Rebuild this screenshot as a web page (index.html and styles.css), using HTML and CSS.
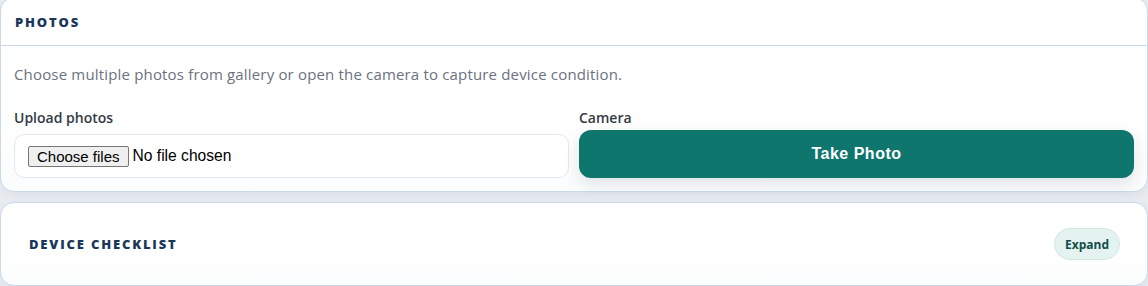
FILE: index.html
```html
<!DOCTYPE html>
<html>
<head>
<meta charset="utf-8">
<link rel="stylesheet" href="styles.css">
</head>
<body>
<div class="page">
  <section class="card card-photos">
    <div class="card-head">
      <h2 class="card-title">PHOTOS</h2>
    </div>
    <div class="card-body">
      <p class="hint">Choose multiple photos from gallery or open the camera to capture device condition.</p>
      <div class="grid">
        <div class="field">
          <span class="label">Upload photos</span>
          <label class="file-box">
            <input class="file-native" type="file" multiple>
            <span class="file-btn">Choose files</span>
            <span class="file-name">No file chosen</span>
          </label>
        </div>
        <div class="field">
          <span class="label">Camera</span>
          <button class="btn-primary" type="button">Take Photo</button>
        </div>
      </div>
    </div>
  </section>
  <section class="card card-check">
    <h2 class="card-title">DEVICE CHECKLIST</h2>
    <button class="btn-pill" type="button">Expand</button>
  </section>
</div>
</body>
</html>
```
FILE: styles.css
```css
* { box-sizing: border-box; }
html, body { margin: 0; padding: 0; }
body {
  background: #e8ecf1;
  font-family: "Open Sans", "Noto Sans", sans-serif;
  width: 1148px;
  height: 286px;
  overflow: hidden;
}
.page {
  display: flex;
  flex-direction: column;
  gap: 10px;
  margin-top: -3px;
}
.card {
  background: linear-gradient(#ffffff 60%, #fbfcfd);
  border: 1px solid #c7d9ea;
  border-radius: 14px;
  box-shadow: 0 3px 8px rgba(30, 58, 95, 0.06);
}
.card-head {
  padding: 15px 14px 13px;
  border-bottom: 1px solid #c7d9ea;
}
.card-title {
  margin: 0;
  font-size: 13px;
  line-height: 19px;
  font-weight: 800;
  letter-spacing: 0.14em;
  color: #1a375a;
}
.card-body {
  padding: 18px 13px 13px;
}
.hint {
  margin: 0;
  font-size: 15px;
  line-height: 20px;
  letter-spacing: 0.17px;
  color: #6b7280;
}
.grid {
  display: grid;
  grid-template-columns: 1fr 1fr;
  gap: 10px;
  align-items: end;
  margin-top: 24px;
}
.field {
  display: flex;
  flex-direction: column;
}
.label {
  font-size: 14px;
  line-height: 20px;
  font-weight: 600;
  color: #333a44;
}
.file-box {
  margin-top: 6px;
  height: 44px;
  border: 1px solid #e3e7ec;
  border-radius: 10px;
  padding: 0 12px 0 13px;
  display: flex;
  align-items: center;
  gap: 4px;
  background: #fff;
  font-family: "Liberation Sans", Arial, sans-serif;
  color: #000;
}
.file-native {
  display: none;
}
.file-btn {
  height: 21px;
  padding: 0 8px;
  display: flex;
  align-items: center;
  font-size: 15px;
  background: #efefef;
  border: 1px solid #767676;
  border-radius: 2px;
}
.file-name {
  font-size: 15.6px;
}
.btn-primary {
  margin-top: 2px;
  height: 48px;
  border: none;
  border-radius: 12px;
  background: #0f766e;
  color: #fff;
  font-family: "Liberation Sans", Arial, sans-serif;
  font-size: 16px;
  font-weight: 700;
  letter-spacing: 0.5px;
  box-shadow: 0 6px 16px rgba(20, 40, 60, 0.12);
}
.card-check {
  display: flex;
  align-items: center;
  justify-content: space-between;
  padding: 25px 27px 25px 28px;
}
.btn-pill {
  height: 32px;
  padding: 0 10px;
  border: 1px solid #d3e8e3;
  border-radius: 16px;
  background: #e5f3f0;
  color: #114e4b;
  font-family: "Open Sans", sans-serif;
  font-size: 12px;
  font-weight: 700;
}
```
